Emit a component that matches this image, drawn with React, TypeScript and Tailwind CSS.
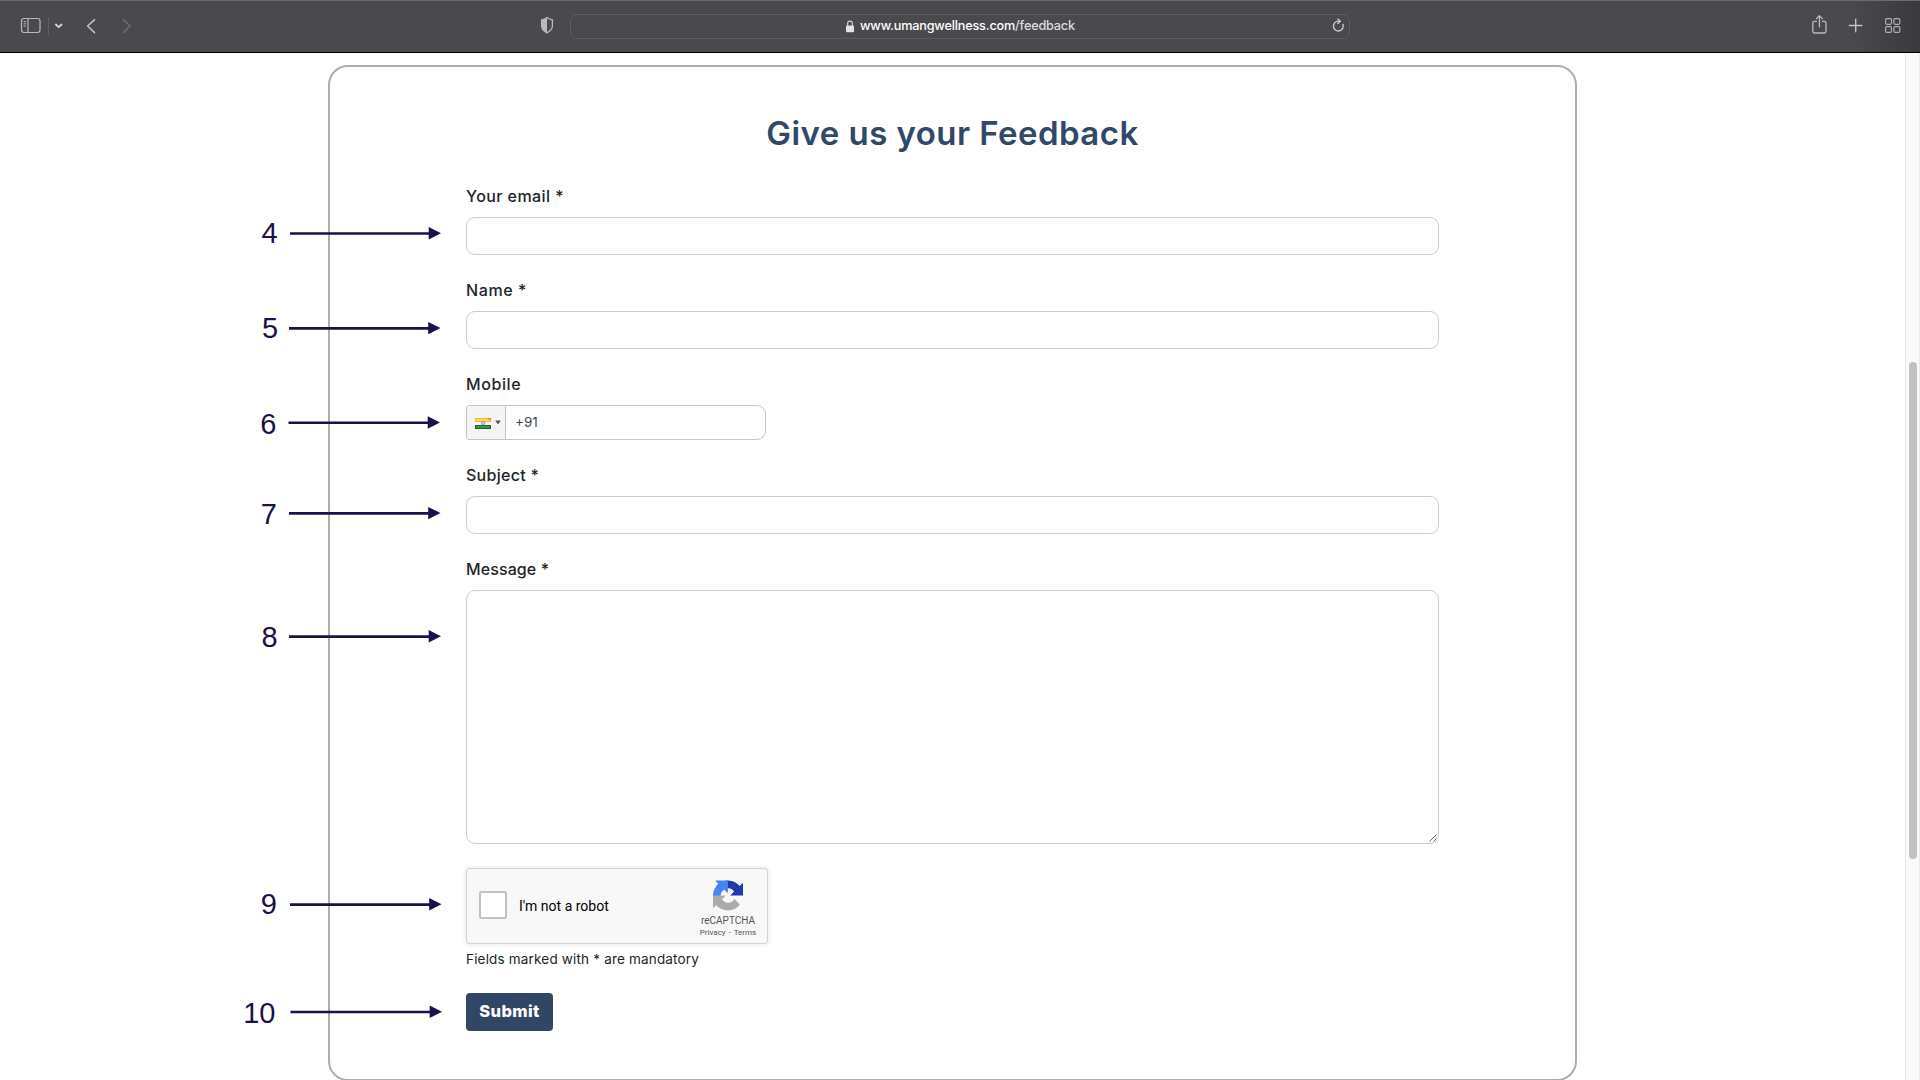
import React from 'react';

const BODY_FONT = "font-['Inter',sans-serif]";

type MarkProps = { n: string; x: number; y: number; ty: number; from: number; to: number };

const marks: MarkProps[] = [
  { n: '4', x: 277.7, y: 233.5, ty: 242.6, from: 290, to: 441 },
  { n: '5', x: 278.2, y: 328.4, ty: 337.6, from: 289, to: 440.5 },
  { n: '6', x: 276.5, y: 422.8, ty: 433.6, from: 288.5, to: 440 },
  { n: '7', x: 277, y: 513.4, ty: 523.8, from: 289, to: 440.5 },
  { n: '8', x: 277.7, y: 636.6, ty: 646.8, from: 289, to: 441 },
  { n: '9', x: 277, y: 904.6, ty: 914.4, from: 290, to: 441.5 },
  { n: '10', x: 275.5, y: 1012, ty: 1023.4, from: 290.5, to: 442 },
];

function Callouts() {
  return (
    <svg className="pointer-events-none absolute top-0 left-0" width="460" height="1080" viewBox="0 0 460 1080">
      {marks.map((m) => (
        <g key={m.n} fill="#1b104c">
          <text x={m.x} y={m.ty} textAnchor="end" fontFamily="Liberation Sans, Arial, sans-serif" fontSize="29">
            {m.n}
          </text>
          <path d={`M${m.from} ${m.y}H${m.to - 8}`} stroke="#1b104c" strokeWidth="2.6" />
          <path d={`M${m.to} ${m.y - 0.3}l-12.3 -6.2v12.4z`} />
        </g>
      ))}
    </svg>
  );
}

function Toolbar() {
  return (
    <header className="flex h-[53px] shrink-0 items-start border-t border-b border-t-[#6c6b70] border-b-black bg-[linear-gradient(to_right,#4a494d_0px,#4a494d_1850px,#3a393c_1920px)]">
      <svg className="ml-[20px] mt-[16px]" width="22" height="17" viewBox="0 0 22 17" fill="none" stroke="#b9b8bc" strokeWidth="1.2">
        <rect x="1.5" y="1.5" width="18.5" height="14" rx="2.4" />
        <path d="M8 1.5v14" />
        <path d="M3.6 4.6h2.4M3.6 6.8h2.4M3.6 9h2.4" strokeWidth="1" />
      </svg>
      <div className="ml-[6px] mt-[16px] h-[18px] w-px bg-[#5e5d61]" />
      <svg className="ml-[5px] mt-[21px]" width="10" height="8" viewBox="0 0 10 8" fill="none" stroke="#dddcdf" strokeWidth="1.7" strokeLinecap="round" strokeLinejoin="round">
        <path d="M1.8 2.5L4.7 5.1L7.6 2.5" />
      </svg>
      <svg className="ml-[22px] mt-[17px]" width="12" height="16" viewBox="0 0 12 16" fill="none" stroke="#c5c4c8" strokeWidth="1.5" strokeLinecap="round" strokeLinejoin="round">
        <path d="M8.6 1.6L1.6 8L8.6 14.6" />
      </svg>
      <svg className="ml-[23px] mt-[17px]" width="12" height="16" viewBox="0 0 12 16" fill="none" stroke="#6d6c70" strokeWidth="1.5" strokeLinecap="round" strokeLinejoin="round">
        <path d="M2.4 1.6L9.2 8L2.4 14.6" />
      </svg>
      <svg className="ml-[406px] mt-[15px]" width="18" height="19" viewBox="0 0 18 19" fill="none">
        <path d="M8 1.6C9.600 3 11.200 3.600 13.400 3.900V10c0 3.200-2.300 5.200-5.400 6.800-3.100-1.600-5.400-3.600-5.400-6.800V3.900C4.800 3.600 6.400 3 8 1.600z" stroke="#bab9be" strokeWidth="1.3" />
        <path d="M8 1.600V16.800c-3.100-1.600-5.400-3.600-5.400-6.800V3.900C4.800 3.600 6.400 3 8 1.600z" fill="#bab9be" />
      </svg>
      <div className="ml-[13px] mt-[13px] flex h-[25px] w-[780px] items-center rounded-[7px] border border-[#5c5b5f]">
        <svg className="ml-[274px] mb-px" width="10" height="13" viewBox="0 0 10 13" fill="none">
          <rect x="1" y="5.500" width="8" height="6.800" rx="1" fill="#e3e2e4" />
          <path d="M2.600 6V3.600a2.400 2.400 0 0 1 4.800 0V6" stroke="#cfced1" strokeWidth="1.200" />
        </svg>
        <div className="ml-[5px] w-[224px] pb-[2px] text-[12.700px] leading-[21px] font-medium whitespace-nowrap text-white font-['Inter',sans-serif] tracking-[-0.190px]">
          www.umangwellness.com<span className="text-[#dddde0]">/feedback</span>
        </div>
        <svg className="ml-[247px] mb-[2px]" width="15" height="15" viewBox="0 0 15 15" fill="none" stroke="#d2d1d4" strokeWidth="1.300" strokeLinecap="round" strokeLinejoin="round">
          <path d="M11.900 6.300A4.900 4.900 0 1 1 7.700 3.200H9" />
          <path d="M6.800 0.900L9.200 3.200L6.800 5.400" />
        </svg>
      </div>
      <svg className="ml-[461px] mt-[13px]" width="18" height="21" viewBox="0 0 18 21" fill="none" stroke="#bab9bd" strokeWidth="1.300" strokeLinecap="round" strokeLinejoin="round">
        <path d="M5.500 7.300H3.700a1.900 1.900 0 0 0-1.900 1.900v7.900a1.900 1.900 0 0 0 1.900 1.900h9.400a1.900 1.900 0 0 0 1.900-1.900V9.200a1.900 1.900 0 0 0-1.900-1.900h-1.800" />
        <path d="M8.400 12.900V1.900M5.400 4.600L8.400 1.700L11.400 4.600" />
      </svg>
      <svg className="ml-[19px] mt-[16px]" width="16" height="17" viewBox="0 0 16 17" fill="none" stroke="#c3c2c6" strokeWidth="1.400" strokeLinecap="round">
        <path d="M1.300 8.500h12.600M7.700 2.200v12.600" />
      </svg>
      <svg className="ml-[20px] mt-[16px]" width="18" height="17" viewBox="0 0 18 17" fill="none" stroke="#aeadb1" strokeWidth="1.200">
        <rect x="1.600" y="1.600" width="5.900" height="5.700" rx="1.200" />
        <rect x="9.900" y="1.600" width="5.900" height="5.700" rx="1.200" />
        <rect x="1.600" y="9.700" width="5.900" height="5.700" rx="1.200" />
        <rect x="9.900" y="9.700" width="5.900" height="5.700" rx="1.200" />
      </svg>
    </header>
  );
}

function Field({ label, tracking, children }: { label: string; tracking: string; children: React.ReactNode }) {
  return (
    <div className="flex flex-col gap-[9px]">
      <label className={`h-6 text-[16px] leading-6 font-medium text-[#212529] ${tracking}`}>{label}</label>
      {children}
    </div>
  );
}

function TextInput() {
  return <div className="h-[38px] rounded-[9px] border border-[#c9ced6] bg-white" />;
}

function Recaptcha() {
  return (
    <div className="flex h-[76px] w-[302px] rounded-[3px] border border-[#d3d3d3] bg-[#f8f8f8] font-['Roboto',sans-serif] shadow-[0_0_4px_1px_rgba(0,0,0,0.08)]">
      <div className="mt-[22px] ml-[12px] size-[28px] rounded-[2px] border-2 border-[#c1c1c1] bg-white" />
      <div className="mt-[29px] ml-[12px] w-[156px] text-[14px] leading-[17px] text-black">I'm not a robot</div>
      <div className="mt-[11px] ml-[16px] flex w-[74px] flex-col items-center text-[#555555]">
        <svg width="30" height="31" viewBox="0 0 64 64">
          <path fill="#1c3aa9" d="M64 31.955l-.033-1.370V4.687l-7.160 7.160C50.948 4.674 42.033.093 32.050.093c-10.400 0-19.622 4.960-25.458 12.640l11.736 11.860a15.550 15.550 0 0 1 4.754-5.334c2.050-1.600 4.952-2.906 8.968-2.906.485 0 .860.057 1.135.163 4.976.393 9.288 3.140 11.828 7.124l-8.307 8.307L64 31.953" />
          <path fill="#4285f4" d="M31.862.094l-1.370.033H4.594l7.160 7.160C4.580 13.147 0 22.060 0 32.046c0 10.400 4.960 19.622 12.640 25.458L24.500 45.768a15.550 15.550 0 0 1-5.334-4.754c-1.600-2.050-2.906-4.952-2.906-8.968 0-.485.057-.860.163-1.135.393-4.976 3.140-9.288 7.124-11.828l8.307 8.307L31.860.095" />
          <path fill="#ababab" d="M.001 32.045l.033 1.370v25.898l7.160-7.160c5.860 7.173 14.774 11.754 24.760 11.754 10.400 0 19.622-4.960 25.458-12.640l-11.736-11.860a15.550 15.550 0 0 1-4.754 5.334c-2.050 1.600-4.952 2.906-8.968 2.906-.485 0-.860-.057-1.135-.163-4.976-.393-9.288-3.140-11.828-7.124l8.307-8.307c-10.522.040-22.400.066-27.295-.005" />
        </svg>
        <div className="mt-[4px] text-[10px] leading-[12px]">reCAPTCHA</div>
        <div className="mt-[1px] text-[8px] leading-[10px] whitespace-nowrap">
          Privacy <span className="px-px">-</span> Terms
        </div>
      </div>
    </div>
  );
}

function PhoneInput() {
  return (
    <div className="flex h-[35px] w-[300px] overflow-hidden rounded-l-[3px] rounded-r-[9px] border border-[#c4c4c4] bg-white">
      <div className="flex w-[39px] items-center border-r border-[#c4c4c4] bg-[#f4f4f4] pl-[8px]">
        <svg className="mt-[2px]" width="16" height="11" viewBox="0 0 16 11">
          <rect width="16" height="11" fill="#f7f7f7" />
          <rect width="16" height="4" fill="#f6b62c" />
          <rect x="1" y="1" width="14" height="2" fill="#fbd66b" />
          <rect x="13" width="3" height="1.500" fill="#f07c1d" />
          <rect y="7" width="16" height="4" fill="#1c6b1c" />
          <rect x="1" y="8" width="14" height="2" fill="#3c9440" />
          <circle cx="8" cy="5.400" r="1.700" fill="#c5d3ea" stroke="#6d8fc8" strokeWidth=".8" />
        </svg>
        <svg className="ml-[4px]" width="6" height="5" viewBox="0 0 6 5">
          <path d="M0.200 0.500h5.600L3 4.500z" fill="#555" />
        </svg>
      </div>
      <div className="pl-[9px] text-[13.500px] leading-[33px] text-[#404850]">+91</div>
    </div>
  );
}

export default function App() {
  return (
    <div className={`relative flex h-[1080px] w-[1920px] flex-col overflow-hidden bg-white ${BODY_FONT}`}>
      <Toolbar />
      <div className="flex min-h-0 flex-1 justify-between">
        <main className="mt-[12px] ml-[328px] h-[1016px] w-[1249px] shrink-0 rounded-[20px] border-2 border-[#adadad] px-[136px]">
          <h1 className="mt-[43px] h-[46px] text-center text-[33px] leading-[46px] font-semibold whitespace-nowrap text-[#314869] tracking-[0.450px]">
            Give us your Feedback
          </h1>
          <form className="mt-[28px] flex flex-col gap-[23px]">
            <Field label="Your email *" tracking="tracking-[0.420px]">
              <TextInput />
            </Field>
            <Field label="Name *" tracking="tracking-[0.600px]">
              <TextInput />
            </Field>
            <Field label="Mobile" tracking="tracking-[0.600px]">
              <PhoneInput />
            </Field>
            <Field label="Subject *" tracking="tracking-[0.270px]">
              <TextInput />
            </Field>
            <Field label="Message *" tracking="tracking-[0.100px]">
              <div className="flex h-[254px] items-end justify-end rounded-[9px] border border-[#c9ced6] bg-white">
                <svg width="9" height="9" viewBox="0 0 9 9" stroke="#555" strokeWidth="0.900">
                  <path d="M0.500 7.500L7.500 0.500M4.500 7.500L7.500 4.500" />
                </svg>
              </div>
            </Field>
          </form>
          <div className="mt-[24px]">
            <Recaptcha />
          </div>
          <p className="mt-[5px] h-[20px] text-[13.500px] leading-[20px] whitespace-nowrap text-[#212529] tracking-[0.180px]">
            Fields marked with * are mandatory
          </p>
          <button className="mt-[24px] flex h-[38px] w-[87px] justify-center rounded-[4px] bg-[#314664] text-[16.500px] leading-[36px] font-extrabold text-white tracking-[0.400px]">
            Submit
          </button>
        </main>
        <div className="flex w-[15px] justify-end border-r border-l border-r-[#ececec] border-l-[#e6e6e6] bg-[#fafafa] pr-[2px]">
          <div className="mt-[309px] h-[497px] w-[8px] rounded-full bg-[#c1c1c1]" />
        </div>
      </div>
      <Callouts />
    </div>
  );
}
